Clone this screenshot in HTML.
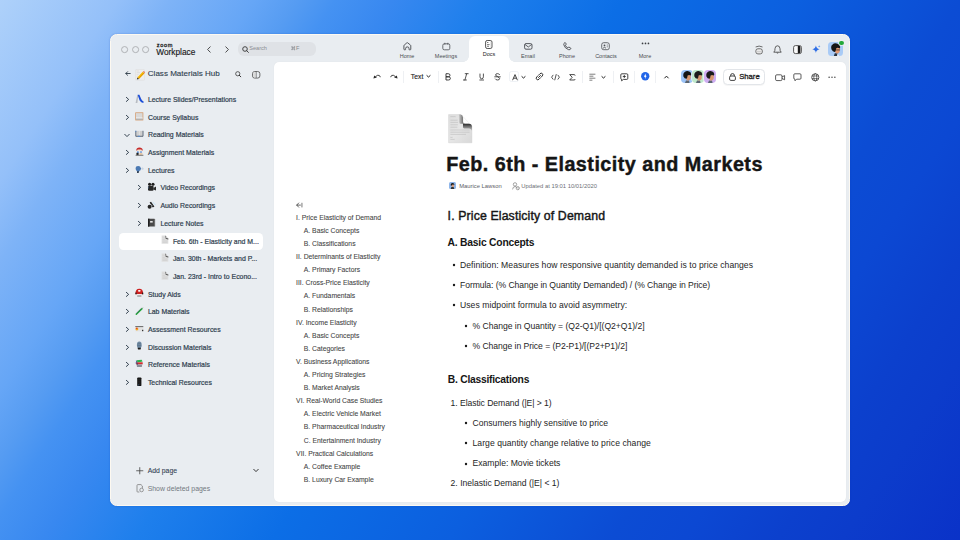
<!DOCTYPE html><html><head><meta charset="utf-8"><style>
*{margin:0;padding:0}
html,body{width:960px;height:540px;overflow:hidden}
body{position:relative;font-family:"Liberation Sans", sans-serif;
 background:linear-gradient(123deg,#aed1fa 0%,#94c0f9 9%,#7eb3f7 13%,#66a6f6 19.4%,#569cf2 22.7%,#4592f2 25.6%,#3888f0 30%,#1e7fec 37%,#0c6ee6 47.5%,#0c5fdf 61%,#0c4cd4 73.3%,#0c48d3 79%,#0c40cd 86%,#0c3ccb 91%,#0a32c8 100%);}
.t{position:absolute;white-space:nowrap;font-family:"Liberation Sans", sans-serif}
.i{position:absolute;overflow:visible}
.box{position:absolute}
.box svg{display:block}
#win{position:absolute;left:109.9px;top:34px;width:740.1px;height:472px;box-sizing:border-box;border:1.1px solid #fdf9f1;border-radius:6.5px;background:#e9edf1;box-shadow:0 0 1.6px rgba(0,50,170,0.4)}
#panel{position:absolute;left:274px;top:62px;width:572px;height:439.6px;border-radius:5px;background:#fff;box-shadow:0 0 1.2px rgba(0,0,0,0.07)}
#tab{position:absolute;left:469px;top:35.8px;width:40px;height:30px;border-radius:6px 6px 0 0;background:#fff}
#tabl{position:absolute;left:463px;top:56.2px;width:6px;height:6px;background:radial-gradient(circle at 0 0,transparent 5.6px,#fff 6.1px)}
#tabr{position:absolute;left:509px;top:56.2px;width:6px;height:6px;background:radial-gradient(circle at 100% 0,transparent 5.6px,#fff 6.1px)}
</style></head><body><div id="win"></div>
<div id="panel"></div>
<div id="tab"></div>
<div id="tabl"></div><div id="tabr"></div>
<svg class="i" style="left:121.4px;top:45.9px;" width="7.2" height="7.2" viewBox="0 0 7.2 7.2"><circle cx="3.6" cy="3.6" r="3.05" fill="none" stroke="#a9abaf" stroke-width="0.9"/></svg>
<svg class="i" style="left:131.6px;top:45.9px;" width="7.2" height="7.2" viewBox="0 0 7.2 7.2"><circle cx="3.6" cy="3.6" r="3.05" fill="none" stroke="#a9abaf" stroke-width="0.9"/></svg>
<svg class="i" style="left:141.8px;top:45.9px;" width="7.2" height="7.2" viewBox="0 0 7.2 7.2"><circle cx="3.6" cy="3.6" r="3.05" fill="none" stroke="#a9abaf" stroke-width="0.9"/></svg>
<div class="t" style="left:156.7px;top:42.16px;height:7.28px;line-height:7.28px;font-size:5.6px;color:#1f1f1f;font-weight:400;letter-spacing:0.7px;-webkit-text-stroke:0.28px #1f1f1f;">zoom</div>
<div class="t" style="left:156.3px;top:46.91px;height:10.79px;line-height:10.79px;font-size:8.3px;color:#1a1a1a;font-weight:400;letter-spacing:0px;-webkit-text-stroke:0.15px #1a1a1a;">Workplace</div>
<svg class="i" style="left:205.5px;top:45.5px;" width="6" height="7" viewBox="0 0 6 7"><path d="M4.2 0.8 L1.6 3.5 L4.2 6.2" fill="none" stroke="#3a3a3a" stroke-width="0.9" stroke-linecap="round" stroke-linejoin="round"/></svg>
<svg class="i" style="left:223.5px;top:45.5px;" width="6" height="7" viewBox="0 0 6 7"><path d="M1.8 0.8 L4.4 3.5 L1.8 6.2" fill="none" stroke="#3a3a3a" stroke-width="0.9" stroke-linecap="round" stroke-linejoin="round"/></svg>
<div class="box" style="left:238px;top:41.6px;width:78px;height:14.4px;border-radius:6px;background:#dfe2e6"></div>
<svg class="i" style="left:241.5px;top:45.5px;" width="7" height="7" viewBox="0 0 7 7"><circle cx="3" cy="3" r="2.3" fill="none" stroke="#333" stroke-width="0.9"/><path d="M4.7 4.7 L6.4 6.4" stroke="#333" stroke-width="0.9" stroke-linecap="round"/></svg>
<div class="t" style="left:249.2px;top:44.56px;height:7.28px;line-height:7.28px;font-size:5.6px;color:#8a8d92;font-weight:400;letter-spacing:0px;">Search</div>
<svg class="i" style="left:290.6px;top:45.7px;" width="4.6" height="4.4" viewBox="0 0 4.6 4.4"><path d="M1.4 1.4 H3.2 V3 H1.4Z M1.4 1.4 Q0.4 1.4 0.6 0.7 Q0.9 0.3 1.4 0.6 Z M3.2 1.4 Q4.2 1.4 4 0.7 Q3.7 0.3 3.2 0.6Z M1.4 3 Q0.4 3 0.6 3.7 Q0.9 4.1 1.4 3.8Z M3.2 3 Q4.2 3 4 3.7 Q3.7 4.1 3.2 3.8Z" fill="none" stroke="#85888d" stroke-width="0.6"/></svg>
<div class="t" style="left:295.9px;top:44.56px;height:7.28px;line-height:7.28px;font-size:5.6px;color:#85888d;font-weight:400;letter-spacing:0px;">F</div>
<div class="t" style="left:377.0px;width:60px;text-align:center;top:52.82px;height:7.15px;line-height:7.15px;font-size:5.5px;color:#4a4d52;font-weight:400;letter-spacing:0px">Home</div>
<div class="t" style="left:416.0px;width:60px;text-align:center;top:52.82px;height:7.15px;line-height:7.15px;font-size:5.5px;color:#4a4d52;font-weight:400;letter-spacing:0px">Meetings</div>
<div class="t" style="left:459.0px;width:60px;text-align:center;top:51.32px;height:7.15px;line-height:7.15px;font-size:5.5px;color:#222;font-weight:400;letter-spacing:0px">Docs</div>
<div class="t" style="left:498.0px;width:60px;text-align:center;top:52.82px;height:7.15px;line-height:7.15px;font-size:5.5px;color:#4a4d52;font-weight:400;letter-spacing:0px">Email</div>
<div class="t" style="left:537.0px;width:60px;text-align:center;top:52.82px;height:7.15px;line-height:7.15px;font-size:5.5px;color:#4a4d52;font-weight:400;letter-spacing:0px">Phone</div>
<div class="t" style="left:576.0px;width:60px;text-align:center;top:52.82px;height:7.15px;line-height:7.15px;font-size:5.5px;color:#4a4d52;font-weight:400;letter-spacing:0px">Contacts</div>
<div class="t" style="left:615.0px;width:60px;text-align:center;top:52.72px;height:7.15px;line-height:7.15px;font-size:5.5px;color:#4a4d52;font-weight:400;letter-spacing:0px">More</div>
<svg class="i" style="left:402.6px;top:41.6px;" width="8.6" height="8.6" viewBox="0 0 8.6 8.6"><path d="M0.9 7.2 V3.8 Q0.9 3.4 1.2 3.1 L3.8 0.9 Q4.3 0.5 4.8 0.9 L7.5 3.1 Q7.8 3.4 7.8 3.8 V7.2 Q7.8 7.8 7.2 7.8 H6.4 Q6 7.8 6 7.4 V6.4 Q6 4.9 4.3 4.9 Q2.6 4.9 2.6 6.4 V7.4 Q2.6 7.8 2.2 7.8 H1.5 Q0.9 7.8 0.9 7.2Z" fill="none" stroke="#3c3f44" stroke-width="0.85" stroke-linejoin="round"/></svg>
<svg class="i" style="left:441.8px;top:42px;" width="8.5" height="8.5" viewBox="0 0 8.5 8.5"><rect x="0.8" y="1.8" width="7" height="6" rx="1.5" fill="none" stroke="#4a4d52" stroke-width="0.8"/><path d="M2.8 0.8 V2.6 M5.8 0.8 V2.6" stroke="#4a4d52" stroke-width="0.8"/></svg>
<svg class="i" style="left:484.8px;top:40px;" width="7.8" height="9" viewBox="0 0 7.8 9"><rect x="0.6" y="0.5" width="6.4" height="8" rx="1.6" fill="none" stroke="#2a2a2a" stroke-width="0.8"/><path d="M5.9 1.2 V7.8" stroke="#bbb" stroke-width="0.5"/><path d="M2 2.5 H3.4 M2 4.6 H4.6 M2 6.3 H4" stroke="#333" stroke-width="0.65"/></svg>
<svg class="i" style="left:523.8px;top:42.6px;" width="8.6" height="6.8" viewBox="0 0 8.6 6.8"><rect x="0.6" y="0.6" width="7.4" height="5.6" rx="1.4" fill="none" stroke="#3c3f44" stroke-width="0.85"/><path d="M1.4 1.8 L4.3 4 L7.2 1.8" fill="none" stroke="#3c3f44" stroke-width="0.8" stroke-linecap="round"/></svg>
<svg class="i" style="left:562.8px;top:41.8px;" width="8.6" height="8.6" viewBox="0 0 8.6 8.6"><path d="M1.8 0.7 Q0.6 1.2 0.8 2.8 Q1.6 6.2 5.4 7.6 Q7.2 8.2 7.8 6.8 Q8 6 7 5.6 L6 5.2 Q5.2 5 4.8 5.8 Q3 5 2.4 3.4 Q3.2 3 3.1 2.2 L2.8 1.2 Q2.5 0.5 1.8 0.7Z" fill="none" stroke="#3c3f44" stroke-width="0.85" stroke-linejoin="round"/></svg>
<svg class="i" style="left:601px;top:42px;" width="9" height="8.5" viewBox="0 0 9 8.5"><rect x="0.7" y="0.7" width="7.6" height="7" rx="2" fill="none" stroke="#4a4d52" stroke-width="0.8"/><circle cx="3.5" cy="3.4" r="0.9" fill="#4a4d52"/><path d="M2 6.2 Q3.5 4.5 5 6.2" fill="none" stroke="#4a4d52" stroke-width="0.8"/><path d="M5.8 3 H6.8 M5.8 4.8 H6.8" stroke="#4a4d52" stroke-width="0.7"/></svg>
<svg class="i" style="left:640.5px;top:41.6px;" width="9" height="2.8" viewBox="0 0 9 2.8"><circle cx="1.55" cy="1.4" r="0.85" fill="#3a3d42"/><circle cx="4.5" cy="1.4" r="0.85" fill="#3a3d42"/><circle cx="7.45" cy="1.4" r="0.85" fill="#3a3d42"/></svg>
<svg class="i" style="left:754.6px;top:45px;" width="8.2" height="9.6" viewBox="0 0 8.2 9.6"><path d="M1 1.8 Q4.1 0.2 7.2 1.8" fill="none" stroke="#4a4a4a" stroke-width="0.8" stroke-linecap="round"/><rect x="0.9" y="3.8" width="6.4" height="5.1" rx="2" fill="#f2f2f2" stroke="#4a4a4a" stroke-width="0.8"/><path d="M1.4 6.6 H6.8" stroke="#cfcfcf" stroke-width="1.6"/></svg>
<svg class="i" style="left:773.4px;top:44.8px;" width="9" height="8.6" viewBox="0 0 9 8.6"><path d="M4.5 0.8 Q2.2 0.8 2 3.6 L1.8 5.6 L0.8 7.2 H8.2 L7.2 5.6 L7 3.6 Q6.8 0.8 4.5 0.8 Z" fill="none" stroke="#3c3c3c" stroke-width="0.8" stroke-linejoin="round"/><path d="M3.7 7.8 Q4.5 8.4 5.3 7.8" fill="none" stroke="#3c3c3c" stroke-width="0.8"/></svg>
<svg class="i" style="left:793px;top:44.8px;" width="9" height="9.2" viewBox="0 0 9 9.2"><rect x="0.6" y="0.6" width="7.8" height="8" rx="1.8" fill="#fafafa" stroke="#3c3c3c" stroke-width="0.85"/><rect x="4.8" y="1" width="2.4" height="7.2" fill="#1a1a1a"/><rect x="7.2" y="1" width="0.9" height="7.2" fill="#888"/></svg>
<svg class="i" style="left:812.4px;top:45px;" width="9.6" height="8.4" viewBox="0 0 9.6 8.4"><path d="M3.9 0.6 Q4.3 3.6 7.6 4.3 Q4.3 5 3.9 8 Q3.5 5 0.3 4.3 Q3.5 3.6 3.9 0.6 Z" fill="#2f6fe6"/><path d="M7.2 0.2 Q7.4 1.2 8.4 1.4 Q7.4 1.6 7.2 2.6 Q7 1.6 6 1.4 Q7 1.2 7.2 0.2Z" fill="#6aa0f2"/></svg>
<div class="box" style="left:828.2px;top:41.8px;width:14.8px;height:14.2px;border-radius:3.5px;background:#a9cbf6;overflow:hidden"><svg width="15.4" height="14.2" viewBox="0 0 16 15"><path d="M6 15 L7 12 L10 12 L9.5 15Z" fill="#2a3340"/><path d="M9.5 15 L10 12.5 L12 15Z" fill="#e8eef5"/><path d="M6.6 6 Q7 12.6 10 12.2 Q12.6 11.6 12.4 8 L12 5.6Z" fill="#e39a73"/><path d="M8.4 8.4 H12.6" stroke="#222" stroke-width="0.7"/><path d="M3.6 8 Q2.4 4 4.8 2.6 Q6.4 1 9 1.6 Q11.8 2 12.6 4.4 Q13 6.2 12.2 7 Q10.4 5.6 8.6 6.6 Q8.2 9.4 7.2 10.6 Q5 10.8 3.6 8Z" fill="#161616"/></svg></div>
<div class="box" style="left:839.2px;top:40.8px;width:4.6px;height:4.4px;border-radius:50%;background:#22a83a;box-shadow:0 0 0 0.7px #eef0f2"></div>
<svg class="i" style="left:124.9px;top:71.4px;" width="5.8" height="5" viewBox="0 0 5.8 5"><path d="M5.2 2.5 H0.9 M2.6 0.7 L0.8 2.5 L2.6 4.3" fill="none" stroke="#22313f" stroke-width="0.85" stroke-linecap="round" stroke-linejoin="round"/></svg>
<svg class="i" style="left:134.8px;top:68.8px;" width="10.2" height="11.6" viewBox="0 0 10.2 11.6"><rect x="0.5" y="0.5" width="9" height="10.8" rx="0.6" fill="#ededed" stroke="#d9d9d9" stroke-width="0.4"/><path d="M1.6 2 H4 M1.6 3.6 H5 M1.6 5.4 H3.6 M1.6 7.2 H3" stroke="#cfcfcf" stroke-width="0.45"/><path d="M3.2 9.2 L8.6 3.6" stroke="#f2b705" stroke-width="2.3"/><path d="M3.6 9.6 L8.9 4.1" stroke="#e08a00" stroke-width="0.7"/><path d="M7.8 2.8 L9.4 4.4 L10 3.4 Q9.6 2.2 8.8 2.1Z" fill="#e8805a"/><path d="M2.4 8.4 L4 10 L1.8 10.6Z" fill="#333"/></svg>
<div class="t" style="left:147.8px;top:68.97px;height:10.47px;line-height:10.47px;font-size:8.05px;color:#2f3e4e;font-weight:400;letter-spacing:0px;-webkit-text-stroke:0.12px #2f3e4e;">Class Materials Hub</div>
<svg class="i" style="left:234.9px;top:71.2px;" width="6.6" height="6.6" viewBox="0 0 6.6 6.6"><circle cx="2.75" cy="2.75" r="2.1" fill="none" stroke="#3a3a3a" stroke-width="0.8"/><path d="M4.3 4.3 L5.8 5.8" stroke="#222" stroke-width="0.9" stroke-linecap="round"/></svg>
<svg class="i" style="left:251.7px;top:70.7px;" width="8.4" height="7.6" viewBox="0 0 8.4 7.6"><rect x="0.5" y="0.5" width="7.4" height="6.6" rx="2.2" fill="none" stroke="#555" stroke-width="0.85"/><path d="M4.1 0.8 V6.8" stroke="#555" stroke-width="0.8"/><path d="M1.2 1.6 Q2.6 1 3.6 1.2 V6.4 Q2.6 6.6 1.2 6Z" fill="#dadada"/></svg>
<div class="box" style="left:118.8px;top:232.8px;width:144.7px;height:16.9px;border-radius:4.5px;background:#ffffff"></div>
<svg class="i" style="left:124.9px;top:96.0px;" width="5" height="6" viewBox="0 0 5 6"><path d="M1.35 1.35 L3.65 3.4 L1.35 5.45" fill="none" stroke="#22313f" stroke-width="0.9" stroke-linecap="round" stroke-linejoin="round"/></svg>
<svg class="i" style="left:134.7px;top:93.7px;" width="9" height="9.6" viewBox="0 0 9 9.6"><path d="M0.6 9 L2.2 1.2 L3.4 1 L2.4 9Z" fill="#b8bcc2"/><path d="M2.6 0.8 L4.4 0.8 L6.2 5 Q7 6.8 8.6 7.6 L8.4 9.1 Q6 8.8 4.6 6.4Z" fill="#1d4fd8"/></svg>
<div class="t" style="left:147.9px;top:96.02px;height:8.97px;line-height:8.97px;font-size:6.9px;color:#2f3e4f;font-weight:400;letter-spacing:0.02px;-webkit-text-stroke:0.2px #2f3e4f;">Lecture Slides/Presentations</div>
<svg class="i" style="left:124.9px;top:113.69px;" width="5" height="6" viewBox="0 0 5 6"><path d="M1.35 1.35 L3.65 3.4 L1.35 5.45" fill="none" stroke="#22313f" stroke-width="0.9" stroke-linecap="round" stroke-linejoin="round"/></svg>
<svg class="i" style="left:134.7px;top:111.39px;" width="9" height="9.6" viewBox="0 0 9 9.6"><rect x="0.65" y="1.75" width="7.3" height="7.3" fill="#d9d9d9" stroke="#d49664" stroke-width="0.7"/><rect x="1" y="6.6" width="6.6" height="1" fill="#fafafa"/><rect x="1" y="7.6" width="6.6" height="1.1" fill="#a9a9a9"/></svg>
<div class="t" style="left:147.9px;top:113.7px;height:8.97px;line-height:8.97px;font-size:6.9px;color:#2f3e4f;font-weight:400;letter-spacing:0.02px;-webkit-text-stroke:0.2px #2f3e4f;">Course Syllabus</div>
<svg class="i" style="left:124.4px;top:132.78px;" width="6" height="5" viewBox="0 0 6 5"><path d="M0.75 1.3 L3 3.6 L5.25 1.3" fill="none" stroke="#22313f" stroke-width="0.9" stroke-linecap="round" stroke-linejoin="round"/></svg>
<svg class="i" style="left:134.7px;top:129.07999999999998px;" width="9" height="9.6" viewBox="0 0 9 9.6"><rect x="1.3" y="1.9" width="6.2" height="5" fill="#cfcfcf"/><path d="M4.4 1.9 V6.9" stroke="#ececec" stroke-width="0.6"/><path d="M0.8 1.8 V7.3 H8 V1.8" fill="none" stroke="#3b4758" stroke-width="0.8"/><path d="M0.8 1.8 V2.8" stroke="#4a8be0" stroke-width="0.8"/><path d="M2.8 7.3 H5" stroke="#4a8be0" stroke-width="0.8"/></svg>
<div class="t" style="left:147.9px;top:131.39px;height:8.97px;line-height:8.97px;font-size:6.9px;color:#2f3e4f;font-weight:400;letter-spacing:0.02px;-webkit-text-stroke:0.2px #2f3e4f;">Reading Materials</div>
<svg class="i" style="left:124.9px;top:149.07px;" width="5" height="6" viewBox="0 0 5 6"><path d="M1.35 1.35 L3.65 3.4 L1.35 5.45" fill="none" stroke="#22313f" stroke-width="0.9" stroke-linecap="round" stroke-linejoin="round"/></svg>
<svg class="i" style="left:134.7px;top:146.76999999999998px;" width="9" height="9.6" viewBox="0 0 9 9.6"><path d="M1.2 3.4 Q1.4 0.6 4.4 0.6 Q7.4 0.6 7.8 3.4Z" fill="#c62a2a"/><rect x="2.2" y="2.6" width="4.6" height="2" rx="0.8" fill="#f3e2cf"/><circle cx="2.9" cy="5.1" r="0.9" fill="#3f86e0"/><circle cx="6" cy="5.1" r="0.9" fill="#3f86e0"/><rect x="1.4" y="5.8" width="2.2" height="2.4" fill="#222"/><rect x="4.6" y="5.8" width="2.8" height="2.4" fill="#e8c8a8"/><rect x="0.6" y="7.8" width="7.8" height="1" fill="#777"/></svg>
<div class="t" style="left:147.9px;top:149.08px;height:8.97px;line-height:8.97px;font-size:6.9px;color:#2f3e4f;font-weight:400;letter-spacing:0.02px;-webkit-text-stroke:0.2px #2f3e4f;">Assignment Materials</div>
<svg class="i" style="left:124.9px;top:166.76px;" width="5" height="6" viewBox="0 0 5 6"><path d="M1.35 1.35 L3.65 3.4 L1.35 5.45" fill="none" stroke="#22313f" stroke-width="0.9" stroke-linecap="round" stroke-linejoin="round"/></svg>
<svg class="i" style="left:134.7px;top:164.45999999999998px;" width="9" height="9.6" viewBox="0 0 9 9.6"><path d="M0.6 4.6 Q0.6 2.1 3.2 2.1 Q5.6 2.1 5.8 4 L6.4 5 L5.6 5.4 Q5.6 6.8 4.4 6.8 L3.6 8.8 L2 8.8 L2 7.2 Q0.6 6.4 0.6 4.6Z" fill="#4b79b3"/><path d="M2 7.4 H4 L3.6 8.8 H2Z" fill="#222"/><path d="M7.4 3.4 V5.8 M8.2 4 V5.4" stroke="#9db4d0" stroke-width="0.4"/></svg>
<div class="t" style="left:147.9px;top:166.77px;height:8.97px;line-height:8.97px;font-size:6.9px;color:#2f3e4f;font-weight:400;letter-spacing:0.02px;-webkit-text-stroke:0.2px #2f3e4f;">Lectures</div>
<svg class="i" style="left:137.4px;top:184.45px;" width="5" height="6" viewBox="0 0 5 6"><path d="M1.35 1.35 L3.65 3.4 L1.35 5.45" fill="none" stroke="#22313f" stroke-width="0.9" stroke-linecap="round" stroke-linejoin="round"/></svg>
<svg class="i" style="left:147.2px;top:182.14999999999998px;" width="9" height="9.6" viewBox="0 0 9 9.6"><circle cx="2.6" cy="2.3" r="1.55" fill="#1d1d1d"/><circle cx="6" cy="2.3" r="1.55" fill="#1d1d1d"/><rect x="1" y="3.8" width="5.6" height="4.9" rx="1.2" fill="#262626"/><path d="M6.4 6 L9 4.6 V8.6 L6.4 7.4Z" fill="#2b2b2b"/><path d="M1.4 4.6 V6.6" stroke="#5f8ab5" stroke-width="0.5"/></svg>
<div class="t" style="left:160.4px;top:184.46px;height:8.97px;line-height:8.97px;font-size:6.9px;color:#2f3e4f;font-weight:400;letter-spacing:0.02px;-webkit-text-stroke:0.2px #2f3e4f;">Video Recordings</div>
<svg class="i" style="left:137.4px;top:202.14px;" width="5" height="6" viewBox="0 0 5 6"><path d="M1.35 1.35 L3.65 3.4 L1.35 5.45" fill="none" stroke="#22313f" stroke-width="0.9" stroke-linecap="round" stroke-linejoin="round"/></svg>
<svg class="i" style="left:147.2px;top:199.83999999999997px;" width="9" height="9.6" viewBox="0 0 9 9.6"><path d="M5.6 2.2 Q7.8 3.4 8.6 5.2" fill="none" stroke="#bfe0f5" stroke-width="0.9"/><path d="M2.6 2.4 L4 1.8 L7.4 6.4 L5.8 7.6Z" fill="#1f1f1f"/><circle cx="2.6" cy="6.8" r="2" fill="#262626"/><path d="M3.8 4.2 L5.4 6" stroke="#c8d4dc" stroke-width="0.6"/></svg>
<div class="t" style="left:160.4px;top:202.15px;height:8.97px;line-height:8.97px;font-size:6.9px;color:#2f3e4f;font-weight:400;letter-spacing:0.02px;-webkit-text-stroke:0.2px #2f3e4f;">Audio Recordings</div>
<svg class="i" style="left:137.4px;top:219.83px;" width="5" height="6" viewBox="0 0 5 6"><path d="M1.35 1.35 L3.65 3.4 L1.35 5.45" fill="none" stroke="#22313f" stroke-width="0.9" stroke-linecap="round" stroke-linejoin="round"/></svg>
<svg class="i" style="left:147.2px;top:217.53px;" width="9" height="9.6" viewBox="0 0 9 9.6"><rect x="1" y="0.7" width="6.8" height="7.9" rx="0.5" fill="#4a4a4a"/><rect x="1" y="0.7" width="1.4" height="7.9" fill="#1e1e1e"/><rect x="3.1" y="3" width="2.6" height="1.6" fill="#e6e6e6"/><path d="M7.8 1 V8.4" stroke="#777" stroke-width="0.5"/></svg>
<div class="t" style="left:160.4px;top:219.84px;height:8.97px;line-height:8.97px;font-size:6.9px;color:#2f3e4f;font-weight:400;letter-spacing:0.02px;-webkit-text-stroke:0.2px #2f3e4f;">Lecture Notes</div>
<svg class="i" style="left:159.7px;top:235.22px;" width="9" height="9.6" viewBox="0 0 9 9.6"><path d="M1.6 0.6 H5.8 L8.3 3.4 V8.7 H1.6Z" fill="#dedede"/><path d="M5.4 0.5 Q6.4 0.8 6.2 3.2 Q7.2 3 8.3 3.6 V4.4 Q7 3.8 5.8 4 Q5.6 2 5.4 0.5Z" fill="#3e3e3e"/><path d="M2.4 2.2 H4.6 M2.4 4.4 H5 M2.4 6 H7.4 M2.4 7.4 H7.4" stroke="#c4c4c4" stroke-width="0.4"/></svg>
<div class="t" style="left:172.9px;top:237.53px;height:8.97px;line-height:8.97px;font-size:6.9px;color:#2f3e4f;font-weight:400;letter-spacing:0.02px;-webkit-text-stroke:0.2px #2f3e4f;">Feb. 6th - Elasticity and M...</div>
<svg class="i" style="left:159.7px;top:252.90999999999997px;" width="9" height="9.6" viewBox="0 0 9 9.6"><path d="M1.6 0.6 H5.8 L8.3 3.4 V8.7 H1.6Z" fill="#dedede"/><path d="M5.4 0.5 Q6.4 0.8 6.2 3.2 Q7.2 3 8.3 3.6 V4.4 Q7 3.8 5.8 4 Q5.6 2 5.4 0.5Z" fill="#3e3e3e"/><path d="M2.4 2.2 H4.6 M2.4 4.4 H5 M2.4 6 H7.4 M2.4 7.4 H7.4" stroke="#c4c4c4" stroke-width="0.4"/></svg>
<div class="t" style="left:172.9px;top:255.22px;height:8.97px;line-height:8.97px;font-size:6.9px;color:#2f3e4f;font-weight:400;letter-spacing:0.02px;-webkit-text-stroke:0.2px #2f3e4f;">Jan. 30th - Markets and P...</div>
<svg class="i" style="left:159.7px;top:270.59999999999997px;" width="9" height="9.6" viewBox="0 0 9 9.6"><path d="M1.6 0.6 H5.8 L8.3 3.4 V8.7 H1.6Z" fill="#dedede"/><path d="M5.4 0.5 Q6.4 0.8 6.2 3.2 Q7.2 3 8.3 3.6 V4.4 Q7 3.8 5.8 4 Q5.6 2 5.4 0.5Z" fill="#3e3e3e"/><path d="M2.4 2.2 H4.6 M2.4 4.4 H5 M2.4 6 H7.4 M2.4 7.4 H7.4" stroke="#c4c4c4" stroke-width="0.4"/></svg>
<div class="t" style="left:172.9px;top:272.91px;height:8.97px;line-height:8.97px;font-size:6.9px;color:#2f3e4f;font-weight:400;letter-spacing:0.02px;-webkit-text-stroke:0.2px #2f3e4f;">Jan. 23rd - Intro to Econo...</div>
<svg class="i" style="left:124.9px;top:290.59px;" width="5" height="6" viewBox="0 0 5 6"><path d="M1.35 1.35 L3.65 3.4 L1.35 5.45" fill="none" stroke="#22313f" stroke-width="0.9" stroke-linecap="round" stroke-linejoin="round"/></svg>
<svg class="i" style="left:134.7px;top:288.28999999999996px;" width="9" height="9.6" viewBox="0 0 9 9.6"><path d="M0.4 6.2 Q0.4 0.8 4.3 0.8 Q8.2 0.8 8.2 6.2Z" fill="#cc2020"/><ellipse cx="4.3" cy="2.8" rx="1.4" ry="0.9" fill="#fff"/><rect x="0.4" y="4.6" width="1.2" height="1.6" fill="#1e1e1e"/><rect x="7" y="4.6" width="1.2" height="1.6" fill="#1e1e1e"/><rect x="1.8" y="6.2" width="5" height="1.3" fill="#f6f6f6"/><rect x="2.2" y="7.5" width="4.2" height="1" fill="#777"/></svg>
<div class="t" style="left:147.9px;top:290.6px;height:8.97px;line-height:8.97px;font-size:6.9px;color:#2f3e4f;font-weight:400;letter-spacing:0.02px;-webkit-text-stroke:0.2px #2f3e4f;">Study Aids</div>
<svg class="i" style="left:124.9px;top:308.28px;" width="5" height="6" viewBox="0 0 5 6"><path d="M1.35 1.35 L3.65 3.4 L1.35 5.45" fill="none" stroke="#22313f" stroke-width="0.9" stroke-linecap="round" stroke-linejoin="round"/></svg>
<svg class="i" style="left:134.7px;top:305.97999999999996px;" width="9" height="9.6" viewBox="0 0 9 9.6"><path d="M1.3 8.3 L7 2.6" stroke="#22a93a" stroke-width="1.5" stroke-linecap="round"/><path d="M1.2 7.6 L6.4 2.4" stroke="#3b3f6a" stroke-width="0.5"/><path d="M7 2.6 L8.2 1.3" stroke="#b9b9b9" stroke-width="0.8"/></svg>
<div class="t" style="left:147.9px;top:308.29px;height:8.97px;line-height:8.97px;font-size:6.9px;color:#2f3e4f;font-weight:400;letter-spacing:0.02px;-webkit-text-stroke:0.2px #2f3e4f;">Lab Materials</div>
<svg class="i" style="left:124.9px;top:325.97px;" width="5" height="6" viewBox="0 0 5 6"><path d="M1.35 1.35 L3.65 3.4 L1.35 5.45" fill="none" stroke="#22313f" stroke-width="0.9" stroke-linecap="round" stroke-linejoin="round"/></svg>
<svg class="i" style="left:134.7px;top:323.67px;" width="9" height="9.6" viewBox="0 0 9 9.6"><rect x="0.3" y="2.3" width="8" height="5" fill="#e2e2e2"/><path d="M0.3 2.6 H8.3" stroke="#333" stroke-width="0.7"/><rect x="7" y="5.8" width="1.3" height="1.4" fill="#333"/><circle cx="1.9" cy="4.9" r="1.4" fill="#f08a24"/><circle cx="1.9" cy="5.6" r="0.8" fill="#f4c20d"/><circle cx="1.6" cy="4.4" r="0.6" fill="#e03b3b"/></svg>
<div class="t" style="left:147.9px;top:325.99px;height:8.97px;line-height:8.97px;font-size:6.9px;color:#2f3e4f;font-weight:400;letter-spacing:0.02px;-webkit-text-stroke:0.2px #2f3e4f;">Assessment Resources</div>
<svg class="i" style="left:124.9px;top:343.66px;" width="5" height="6" viewBox="0 0 5 6"><path d="M1.35 1.35 L3.65 3.4 L1.35 5.45" fill="none" stroke="#22313f" stroke-width="0.9" stroke-linecap="round" stroke-linejoin="round"/></svg>
<svg class="i" style="left:134.7px;top:341.36px;" width="9" height="9.6" viewBox="0 0 9 9.6"><ellipse cx="4.3" cy="4" rx="2.4" ry="3.4" fill="#6f8aa3"/><path d="M2.6 3 Q4.3 2 6 3 M2.4 4.6 H6.2" stroke="#4b5d70" stroke-width="0.4" fill="none"/><path d="M2.6 6.8 H6 L5.6 8.5 H3Z" fill="#1e1e1e"/></svg>
<div class="t" style="left:147.9px;top:343.68px;height:8.97px;line-height:8.97px;font-size:6.9px;color:#2f3e4f;font-weight:400;letter-spacing:0.02px;-webkit-text-stroke:0.2px #2f3e4f;">Discussion Materials</div>
<svg class="i" style="left:124.9px;top:361.35px;" width="5" height="6" viewBox="0 0 5 6"><path d="M1.35 1.35 L3.65 3.4 L1.35 5.45" fill="none" stroke="#22313f" stroke-width="0.9" stroke-linecap="round" stroke-linejoin="round"/></svg>
<svg class="i" style="left:134.7px;top:359.05px;" width="9" height="9.6" viewBox="0 0 9 9.6"><path d="M1.6 1.2 L6.6 0.8 L7.6 2.6 L2.6 3.4Z" fill="#2bb24c"/><path d="M0.8 3.4 L7.6 3.2 L7.8 5.2 L1.2 5.4Z" fill="#d42b2b"/><path d="M1.6 5.4 H7.2 L6.8 7.9 H2Z" fill="#8a8f99"/><path d="M1.4 1.6 L2.4 5.8" stroke="#1e3c78" stroke-width="0.8"/><path d="M0.4 3.6 L1.2 4.8" stroke="#4d8fe0" stroke-width="0.6"/></svg>
<div class="t" style="left:147.9px;top:361.37px;height:8.97px;line-height:8.97px;font-size:6.9px;color:#2f3e4f;font-weight:400;letter-spacing:0.02px;-webkit-text-stroke:0.2px #2f3e4f;">Reference Materials</div>
<svg class="i" style="left:124.9px;top:379.04px;" width="5" height="6" viewBox="0 0 5 6"><path d="M1.35 1.35 L3.65 3.4 L1.35 5.45" fill="none" stroke="#22313f" stroke-width="0.9" stroke-linecap="round" stroke-linejoin="round"/></svg>
<svg class="i" style="left:134.7px;top:376.74px;" width="9" height="9.6" viewBox="0 0 9 9.6"><rect x="2.2" y="0.4" width="4.2" height="8.7" rx="0.9" fill="#151515"/><path d="M3.2 2.4 H5.4 M3.2 4.2 H5.4 M3.2 6 H5.4 M3.2 7.6 H5.4" stroke="#3a3a3a" stroke-width="0.5"/><path d="M3 8 H4" stroke="#3e7bbf" stroke-width="0.5"/></svg>
<div class="t" style="left:147.9px;top:379.06px;height:8.97px;line-height:8.97px;font-size:6.9px;color:#2f3e4f;font-weight:400;letter-spacing:0.02px;-webkit-text-stroke:0.2px #2f3e4f;">Technical Resources</div>
<svg class="i" style="left:136px;top:467px;" width="7.5" height="7.5" viewBox="0 0 7.5 7.5"><path d="M3.75 0.6 V6.9 M0.6 3.75 H6.9" stroke="#444" stroke-width="0.8" stroke-linecap="round"/></svg>
<div class="t" style="left:147.7px;top:466.75px;height:8.9px;line-height:8.9px;font-size:6.85px;color:#344354;font-weight:400;letter-spacing:0px;-webkit-text-stroke:0.1px #344354;">Add page</div>
<svg class="i" style="left:252.8px;top:467.7px;" width="6" height="5" viewBox="0 0 6 5"><path d="M0.75 1.3 L3 3.6 L5.25 1.3" fill="none" stroke="#222" stroke-width="0.9" stroke-linecap="round" stroke-linejoin="round"/></svg>
<svg class="i" style="left:135.8px;top:484.4px;" width="8" height="8.4" viewBox="0 0 8 8.4"><path d="M1 1.4 Q1 0.6 1.8 0.6 H5 L6.4 2 V4" fill="none" stroke="#777" stroke-width="0.75"/><path d="M1 1.4 V7.4 Q1 8 1.8 8 H3.4" fill="none" stroke="#777" stroke-width="0.75"/><circle cx="5.6" cy="6" r="1.8" fill="none" stroke="#777" stroke-width="0.7"/></svg>
<div class="t" style="left:147.7px;top:484.71px;height:8.97px;line-height:8.97px;font-size:6.9px;color:#737880;font-weight:400;letter-spacing:0px;">Show deleted pages</div>
<svg class="i" style="left:372.8px;top:73.8px;" width="8" height="5" viewBox="0 0 8 5"><path d="M2.6 2.6 Q4.4 0.6 6.2 1.4 Q7 1.8 7.2 2.8" fill="none" stroke="#2a2a2a" stroke-width="0.9" stroke-linecap="round"/><path d="M0.4 4.4 L1.2 1.4 L3.9 3.6Z" fill="#2a2a2a"/></svg>
<svg class="i" style="left:389.8px;top:73.8px;" width="8" height="5" viewBox="0 0 8 5"><path d="M5.4 2.6 Q3.6 0.6 1.8 1.4 Q1 1.8 0.8 2.8" fill="none" stroke="#2a2a2a" stroke-width="0.9" stroke-linecap="round"/><path d="M7.6 4.4 L6.8 1.4 L4.1 3.6Z" fill="#2a2a2a"/></svg>
<div class="box" style="left:402.9px;top:71px;width:1px;height:12px;background:#eef0f3"></div>
<div class="box" style="left:438.0px;top:71px;width:1px;height:12px;background:#eef0f3"></div>
<div class="box" style="left:582.0px;top:71px;width:1px;height:12px;background:#eef0f3"></div>
<div class="box" style="left:613.0px;top:71px;width:1px;height:12px;background:#eef0f3"></div>
<div class="box" style="left:633.9px;top:71px;width:1px;height:12px;background:#eef0f3"></div>
<div class="box" style="left:655.1px;top:71px;width:1px;height:12px;background:#eef0f3"></div>
<div class="t" style="left:410.7px;top:73.11px;height:8.58px;line-height:8.58px;font-size:6.6px;color:#1e1e1e;font-weight:400;letter-spacing:0.2px;-webkit-text-stroke:0.15px #1e1e1e;">Text</div>
<svg class="i" style="left:425.5px;top:74.4px;" width="5" height="4" viewBox="0 0 5 4"><path d="M0.9 1.6 L2.5 3.0 L4.1 1.6" fill="none" stroke="#1e1e1e" stroke-width="1.0" stroke-linecap="round" stroke-linejoin="round"/></svg>
<svg class="i" style="left:445.4px;top:72.6px;" width="6.2" height="7.6" viewBox="0 0 6.2 7.6"><path d="M1 0.7 H3.3 Q5 0.7 5 2.3 Q5 3.8 3.3 3.8 H1 Z M1 3.8 H3.6 Q5.4 3.8 5.4 5.4 Q5.4 7 3.6 7 H1 Z" fill="none" stroke="#222" stroke-width="0.85" stroke-linejoin="round"/></svg>
<svg class="i" style="left:462.6px;top:72.6px;" width="5.6" height="7.6" viewBox="0 0 5.6 7.6"><path d="M2.2 0.7 H5.2 M0.4 7 H3.4 M3.7 0.7 L1.9 7" fill="none" stroke="#2a2a2a" stroke-width="0.8" stroke-linecap="round"/></svg>
<svg class="i" style="left:478.8px;top:72.6px;" width="5.4" height="7.6" viewBox="0 0 5.4 7.6"><path d="M1 0.6 V3.8 Q1 5.8 2.7 5.8 Q4.4 5.8 4.4 3.8 V0.6" fill="none" stroke="#2a2a2a" stroke-width="0.8"/><path d="M0.4 7 H5" stroke="#2a2a2a" stroke-width="0.8"/></svg>
<svg class="i" style="left:494px;top:72.6px;" width="7" height="7.6" viewBox="0 0 7 7.6"><path d="M5.6 1.6 Q5 0.6 3.5 0.6 Q1.6 0.6 1.6 2 Q1.6 3.1 3.4 3.4" fill="none" stroke="#2a2a2a" stroke-width="0.8" stroke-linecap="round"/><path d="M4.2 4.1 Q5.6 4.6 5.6 5.6 Q5.6 7 3.6 7 Q1.8 7 1.3 6" fill="none" stroke="#2a2a2a" stroke-width="0.8" stroke-linecap="round"/><path d="M0.3 3.8 H6.7" stroke="#2a2a2a" stroke-width="0.8"/></svg>
<div class="box" style="left:509.2px;top:71.1px;width:10px;height:10.7px;border-radius:2.5px;border:0.6px solid #eef1f5;box-sizing:border-box"></div>
<svg class="i" style="left:511.6px;top:73.6px;" width="6" height="6.6" viewBox="0 0 6 6.6"><path d="M0.6 6.2 L3 0.6 L5.4 6.2 M1.5 4.2 H4.5" fill="none" stroke="#222" stroke-width="0.85" stroke-linejoin="round"/></svg>
<svg class="i" style="left:521.4px;top:74.6px;" width="5" height="4" viewBox="0 0 5 4"><path d="M0.9 1.6 L2.5 3.0 L4.1 1.6" fill="none" stroke="#1e1e1e" stroke-width="1.0" stroke-linecap="round" stroke-linejoin="round"/></svg>
<svg class="i" style="left:534.5px;top:72.2px;" width="9" height="9" viewBox="0 0 9 9"><g transform="rotate(-45 4.5 4.5)" fill="none" stroke="#1e1e1e" stroke-width="0.85" stroke-linecap="round"><path d="M3.9 2.9 H2.2 Q0.5 2.9 0.5 4.5 Q0.5 6.1 2.2 6.1 H3.9 M5.1 2.9 H6.8 Q8.5 2.9 8.5 4.5 Q8.5 6.1 6.8 6.1 H5.1 M3.1 4.5 H5.9"/></g></svg>
<svg class="i" style="left:551px;top:73.8px;" width="9" height="6.4" viewBox="0 0 9 6.4"><path d="M2 1.2 L0.6 3.2 L2 5.2 M7 1.2 L8.4 3.2 L7 5.2 M5.2 0.5 L3.8 5.9" fill="none" stroke="#2a2a2a" stroke-width="0.8" stroke-linecap="round" stroke-linejoin="round"/></svg>
<svg class="i" style="left:568.8px;top:73.6px;" width="6.6" height="6.6" viewBox="0 0 6.6 6.6"><path d="M6.1 1.2 Q6 0.6 5.2 0.6 H0.7 L3.2 3.3 L0.7 6 H5.2 Q6 6 6.1 5.4" fill="none" stroke="#2a2a2a" stroke-width="0.85" stroke-linejoin="round" stroke-linecap="round"/></svg>
<svg class="i" style="left:589.2px;top:72.6px;" width="7.4" height="8" viewBox="0 0 7.4 8"><path d="M0.4 1.2 H6.4 M0.4 3.2 H4.4 M0.4 5.2 H6.4 M0.4 7.2 H3.4" stroke="#2a2a2a" stroke-width="0.6"/></svg>
<svg class="i" style="left:600.9px;top:74.6px;" width="5" height="4" viewBox="0 0 5 4"><path d="M0.9 1.6 L2.5 3.0 L4.1 1.6" fill="none" stroke="#1e1e1e" stroke-width="1.0" stroke-linecap="round" stroke-linejoin="round"/></svg>
<svg class="i" style="left:620.2px;top:72.8px;" width="8.5" height="8.5" viewBox="0 0 8.5 8.5"><path d="M1.8 0.8 H6.8 Q7.8 0.8 7.8 1.8 V5.4 Q7.8 6.4 6.8 6.4 H3.4 L1.6 7.8 V6.4 Q0.8 6.4 0.8 5.4 V1.8 Q0.8 0.8 1.8 0.8Z" fill="none" stroke="#222" stroke-width="0.85" stroke-linejoin="round"/><path d="M4.3 2 V5 M2.8 3.5 H5.8" stroke="#222" stroke-width="0.8"/></svg>
<svg class="i" style="left:641px;top:72.2px;" width="8.5" height="8.5" viewBox="0 0 8.5 8.5"><circle cx="4.25" cy="4.25" r="4.15" fill="#2266e8"/><path d="M4.25 1.6 Q4.55 3.9 5.6 4.25 Q4.55 4.6 4.25 6.9 Q3.95 4.6 2.9 4.25 Q3.95 3.9 4.25 1.6Z" fill="#fff"/></svg>
<svg class="i" style="left:663.8px;top:74.8px;" width="5" height="4" viewBox="0 0 5 4"><path d="M0.7 3 L2.5 1.1 L4.3 3" fill="none" stroke="#1e1e1e" stroke-width="1" stroke-linecap="round" stroke-linejoin="round"/></svg>
<div class="box" style="left:680.9px;top:70px;width:11.8px;height:13px;border-radius:4px;background:#9cc3f6;box-shadow:0 0 0 0.6px #fff;overflow:hidden"><svg width="12" height="13" viewBox="0 0 12 13"><path d="M4 13 L5 10.4 L8 10.4 L8.6 13Z" fill="#5b6672"/><path d="M4.6 5.4 Q4.8 10.8 7.6 10.6 Q10 10.2 9.8 6.6 L9.4 4.6Z" fill="#d8976f"/><path d="M2.4 6.6 Q1.8 3 3.8 2 Q5.2 0.8 7.4 1.2 Q9.8 1.6 10.2 3.8 Q10.4 5.2 9.8 5.6 Q8.2 4.6 6.6 5.4 Q6.4 7.8 5.4 8.8 Q3.4 8.8 2.4 6.6Z" fill="#141414"/></svg></div>
<div class="box" style="left:692.3px;top:70px;width:11.8px;height:13px;border-radius:4px;background:#bfe9cb;box-shadow:0 0 0 0.6px #fff;overflow:hidden"><svg width="12" height="13" viewBox="0 0 12 13"><path d="M4 13 L5 10.4 L8 10.4 L8.6 13Z" fill="#5b6672"/><path d="M4.6 5.4 Q4.8 10.8 7.6 10.6 Q10 10.2 9.8 6.6 L9.4 4.6Z" fill="#d8976f"/><path d="M2.4 6.6 Q1.8 3 3.8 2 Q5.2 0.8 7.4 1.2 Q9.8 1.6 10.2 3.8 Q10.4 5.2 9.8 5.6 Q8.2 4.6 6.6 5.4 Q6.4 7.8 5.4 8.8 Q3.4 8.8 2.4 6.6Z" fill="#1b1b1b"/></svg></div>
<div class="box" style="left:703.9px;top:70px;width:11.8px;height:13px;border-radius:4px;background:#cfaef2;box-shadow:0 0 0 0.6px #fff;overflow:hidden"><svg width="12" height="13" viewBox="0 0 12 13"><path d="M4 13 L5 10.4 L8 10.4 L8.6 13Z" fill="#5b6672"/><path d="M4.6 5.4 Q4.8 10.8 7.6 10.6 Q10 10.2 9.8 6.6 L9.4 4.6Z" fill="#d8976f"/><path d="M2.4 6.6 Q1.8 3 3.8 2 Q5.2 0.8 7.4 1.2 Q9.8 1.6 10.2 3.8 Q10.4 5.2 9.8 5.6 Q8.2 4.6 6.6 5.4 Q6.4 7.8 5.4 8.8 Q3.4 8.8 2.4 6.6Z" fill="#1a1a1a"/></svg></div>
<div class="box" style="left:722.6px;top:69.4px;width:42.8px;height:15.2px;border-radius:4.5px;border:0.7px solid #e2e5e9;box-sizing:border-box;background:#fff;box-shadow:0 0.4px 0.8px rgba(0,0,0,0.04)"></div>
<svg class="i" style="left:729.2px;top:72.9px;" width="7" height="7.8" viewBox="0 0 7 7.8"><rect x="0.6" y="3" width="5.8" height="4.4" rx="1.2" fill="none" stroke="#222" stroke-width="0.85"/><path d="M1.6 3.2 V2.5 Q1.6 0.6 3.5 0.6 Q5.4 0.6 5.4 2.5 V3.2" fill="none" stroke="#222" stroke-width="0.85"/></svg>
<div class="t" style="left:739.2px;top:72.2px;height:10.01px;line-height:10.01px;font-size:7.7px;color:#1e1e1e;font-weight:400;letter-spacing:0px;-webkit-text-stroke:0.3px #1e1e1e;">Share</div>
<svg class="i" style="left:774.6px;top:73.5px;" width="10.4" height="7.4" viewBox="0 0 10.4 7.4"><rect x="0.6" y="0.8" width="6.4" height="5.8" rx="1.2" fill="none" stroke="#333" stroke-width="0.8"/><path d="M7 3 L9.6 1.6 V5.8 L7 4.4" fill="none" stroke="#333" stroke-width="0.8" stroke-linejoin="round"/></svg>
<svg class="i" style="left:792.8px;top:73.1px;" width="8.8" height="8.6" viewBox="0 0 8.8 8.6"><path d="M1.8 0.8 H7 Q8 0.8 8 1.8 V5.2 Q8 6.2 7 6.2 H3.6 L2 7.8 V6.2 Q0.8 6.2 0.8 5.2 V1.8 Q0.8 0.8 1.8 0.8Z" fill="none" stroke="#333" stroke-width="0.8" stroke-linejoin="round"/></svg>
<svg class="i" style="left:810.6px;top:73.1px;" width="8.6" height="8.6" viewBox="0 0 8.6 8.6"><circle cx="4.3" cy="4.3" r="3.6" fill="none" stroke="#333" stroke-width="0.8"/><ellipse cx="4.3" cy="4.3" rx="1.5" ry="3.6" fill="none" stroke="#333" stroke-width="0.7"/><path d="M0.8 3 H7.8 M0.8 5.6 H7.8" stroke="#333" stroke-width="0.6"/></svg>
<svg class="i" style="left:828.4px;top:76.0px;" width="8" height="2.4" viewBox="0 0 8 2.4"><circle cx="1.1" cy="1.2" r="0.7" fill="#333"/><circle cx="4" cy="1.2" r="0.7" fill="#333"/><circle cx="6.9" cy="1.2" r="0.7" fill="#333"/></svg>
<svg class="i" style="left:296.4px;top:202.4px;" width="7.4" height="6.4" viewBox="0 0 7.4 6.4"><path d="M4.4 3.1 H0.8 M2.7 1.0 L0.7 3.1 L2.7 5.2" fill="none" stroke="#333" stroke-width="0.75" stroke-linecap="round" stroke-linejoin="round"/><path d="M5.95 0.8 V5.4" stroke="#555" stroke-width="0.8"/></svg>
<div class="t" style="left:296.1px;top:213.88px;height:8.84px;line-height:8.84px;font-size:6.8px;color:#454545;font-weight:400;letter-spacing:0px;-webkit-text-stroke:0.08px #454545;">I. Price Elasticity of Demand</div>
<div class="t" style="left:303.8px;top:226.98px;height:8.84px;line-height:8.84px;font-size:6.8px;color:#454545;font-weight:400;letter-spacing:0px;-webkit-text-stroke:0.08px #454545;">A. Basic Concepts</div>
<div class="t" style="left:303.8px;top:240.08px;height:8.84px;line-height:8.84px;font-size:6.8px;color:#454545;font-weight:400;letter-spacing:0px;-webkit-text-stroke:0.08px #454545;">B. Classifications</div>
<div class="t" style="left:296.1px;top:253.18px;height:8.84px;line-height:8.84px;font-size:6.8px;color:#454545;font-weight:400;letter-spacing:0px;-webkit-text-stroke:0.08px #454545;">II. Determinants of Elasticity</div>
<div class="t" style="left:303.8px;top:266.28px;height:8.84px;line-height:8.84px;font-size:6.8px;color:#454545;font-weight:400;letter-spacing:0px;-webkit-text-stroke:0.08px #454545;">A. Primary Factors</div>
<div class="t" style="left:296.1px;top:279.38px;height:8.84px;line-height:8.84px;font-size:6.8px;color:#454545;font-weight:400;letter-spacing:0px;-webkit-text-stroke:0.08px #454545;">III. Cross-Price Elasticity</div>
<div class="t" style="left:303.8px;top:292.48px;height:8.84px;line-height:8.84px;font-size:6.8px;color:#454545;font-weight:400;letter-spacing:0px;-webkit-text-stroke:0.08px #454545;">A. Fundamentals</div>
<div class="t" style="left:303.8px;top:305.58px;height:8.84px;line-height:8.84px;font-size:6.8px;color:#454545;font-weight:400;letter-spacing:0px;-webkit-text-stroke:0.08px #454545;">B. Relationships</div>
<div class="t" style="left:296.1px;top:318.68px;height:8.84px;line-height:8.84px;font-size:6.8px;color:#454545;font-weight:400;letter-spacing:0px;-webkit-text-stroke:0.08px #454545;">IV. Income Elasticity</div>
<div class="t" style="left:303.8px;top:331.78px;height:8.84px;line-height:8.84px;font-size:6.8px;color:#454545;font-weight:400;letter-spacing:0px;-webkit-text-stroke:0.08px #454545;">A. Basic Concepts</div>
<div class="t" style="left:303.8px;top:344.88px;height:8.84px;line-height:8.84px;font-size:6.8px;color:#454545;font-weight:400;letter-spacing:0px;-webkit-text-stroke:0.08px #454545;">B. Categories</div>
<div class="t" style="left:296.1px;top:357.98px;height:8.84px;line-height:8.84px;font-size:6.8px;color:#454545;font-weight:400;letter-spacing:0px;-webkit-text-stroke:0.08px #454545;">V. Business Applications</div>
<div class="t" style="left:303.8px;top:371.08px;height:8.84px;line-height:8.84px;font-size:6.8px;color:#454545;font-weight:400;letter-spacing:0px;-webkit-text-stroke:0.08px #454545;">A. Pricing Strategies</div>
<div class="t" style="left:303.8px;top:384.18px;height:8.84px;line-height:8.84px;font-size:6.8px;color:#454545;font-weight:400;letter-spacing:0px;-webkit-text-stroke:0.08px #454545;">B. Market Analysis</div>
<div class="t" style="left:296.1px;top:397.28px;height:8.84px;line-height:8.84px;font-size:6.8px;color:#454545;font-weight:400;letter-spacing:0px;-webkit-text-stroke:0.08px #454545;">VI. Real-World Case Studies</div>
<div class="t" style="left:303.8px;top:410.38px;height:8.84px;line-height:8.84px;font-size:6.8px;color:#454545;font-weight:400;letter-spacing:0px;-webkit-text-stroke:0.08px #454545;">A. Electric Vehicle Market</div>
<div class="t" style="left:303.8px;top:423.48px;height:8.84px;line-height:8.84px;font-size:6.8px;color:#454545;font-weight:400;letter-spacing:0px;-webkit-text-stroke:0.08px #454545;">B. Pharmaceutical Industry</div>
<div class="t" style="left:303.8px;top:436.58px;height:8.84px;line-height:8.84px;font-size:6.8px;color:#454545;font-weight:400;letter-spacing:0px;-webkit-text-stroke:0.08px #454545;">C. Entertainment Industry</div>
<div class="t" style="left:296.1px;top:449.68px;height:8.84px;line-height:8.84px;font-size:6.8px;color:#454545;font-weight:400;letter-spacing:0px;-webkit-text-stroke:0.08px #454545;">VII. Practical Calculations</div>
<div class="t" style="left:303.8px;top:462.78px;height:8.84px;line-height:8.84px;font-size:6.8px;color:#454545;font-weight:400;letter-spacing:0px;-webkit-text-stroke:0.08px #454545;">A. Coffee Example</div>
<div class="t" style="left:303.8px;top:475.88px;height:8.84px;line-height:8.84px;font-size:6.8px;color:#454545;font-weight:400;letter-spacing:0px;-webkit-text-stroke:0.08px #454545;">B. Luxury Car Example</div>
<svg class="i" style="left:447.6px;top:113.8px;" width="24.6" height="29.4" viewBox="0 0 24.6 29.4"><defs><linearGradient id="pg" x1="0" y1="0" x2="1" y2="1"><stop offset="0" stop-color="#dedede"/><stop offset="0.5" stop-color="#e6e6e6"/><stop offset="1" stop-color="#d8d8d8"/></linearGradient><linearGradient id="cv" x1="0" y1="0" x2="1" y2="0"><stop offset="0" stop-color="#d0d0d0"/><stop offset="0.7" stop-color="#707070"/><stop offset="1" stop-color="#222"/></linearGradient><linearGradient id="ch" x1="0" y1="1" x2="0" y2="0"><stop offset="0" stop-color="#d6d6d6"/><stop offset="0.6" stop-color="#7a7a7a"/><stop offset="1" stop-color="#2a2a2a"/></linearGradient></defs><path d="M0.6 0.6 H12.4 Q14.6 0.8 15 3.4 V8.2 Q15.3 9.8 17.2 9.8 H21 Q23.8 10 23.9 12.6 V28.8 H0.6Z" fill="url(#pg)" stroke="#c9c9c9" stroke-width="0.4"/><path d="M10.6 0.6 H12.4 Q14.6 0.8 15 3.4 V8.2 Q15.3 9.8 17.2 9.8 H12.2 Q11.2 9.4 11.2 8 V3 Q11.2 1.2 10.6 0.6Z" fill="url(#cv)"/><path d="M15 9.8 H21 Q23.8 10 23.9 12.6 V17.6 Q23.6 14.6 21 14.4 H16.2 Q15 14.2 15 13Z" fill="url(#ch)"/><path d="M15.6 3.2 L20.6 8.6" stroke="#e2e2e2" stroke-width="0.5"/><path d="M2.4 2.6 H7.6 M2.4 6.2 H9.6 M2.4 8.4 H10 M2.4 10.8 H9.8 M2.4 13.2 H9.4 M2.4 16 H21.6 M2.4 18.2 H21.6 M2.4 20.4 H18 M2.4 23.4 H4.6 M2.4 25.4 H6.6" stroke="#b9b9b9" stroke-width="0.55"/></svg>
<div class="t" style="left:446.2px;top:152.03px;height:25.74px;line-height:25.74px;font-size:19.8px;color:#151515;font-weight:700;letter-spacing:0.47px;-webkit-text-stroke:0.4px #151515;">Feb. 6th - Elasticity and Markets</div>
<div class="box" style="left:449.2px;top:182.3px;width:7px;height:7.2px;border-radius:1.5px;background:#8fb6ea;overflow:hidden"><svg width="7" height="7.2" viewBox="0 0 12 12"><path d="M3 12 Q3 8 6 8 Q9 8 9 12Z" fill="#333"/><ellipse cx="6.5" cy="6" rx="2.2" ry="2.6" fill="#d99a74"/><path d="M3 6 Q2.5 1.5 6 1.5 Q9.5 1.5 9.3 5 Q8 3.6 6 4.2 Q5 5.8 3.6 6.4Z" fill="#1b1b1b"/></svg></div>
<div class="t" style="left:459.2px;top:183.0px;height:7.6px;line-height:7.6px;font-size:5.85px;color:#5c6066;font-weight:400;letter-spacing:0px;">Maurice Lawson</div>
<svg class="i" style="left:512.3px;top:181.8px;" width="8" height="8.4" viewBox="0 0 8 8.4"><circle cx="3" cy="2.4" r="1.7" fill="none" stroke="#666" stroke-width="0.6"/><path d="M0.6 7.4 Q0.8 4.6 3 4.6 Q4 4.6 4.6 5.2" fill="none" stroke="#666" stroke-width="0.6"/><circle cx="5.8" cy="6.2" r="1.6" fill="none" stroke="#666" stroke-width="0.6"/><path d="M5.8 5.4 V6.3 H6.5" fill="none" stroke="#666" stroke-width="0.5"/></svg>
<div class="t" style="left:521.2px;top:183.0px;height:7.6px;line-height:7.6px;font-size:5.85px;color:#6c7076;font-weight:400;letter-spacing:0px;">Updated at 19:01 10/01/2020</div>
<div class="t" style="left:447.6px;top:209.31px;height:15.99px;line-height:15.99px;font-size:12.3px;color:#161616;font-weight:400;letter-spacing:0.13px;-webkit-text-stroke:0.42px #161616;">I. Price Elasticity of Demand</div>
<div class="t" style="left:447.6px;top:235.91px;height:13.39px;line-height:13.39px;font-size:10.3px;color:#161616;font-weight:700;letter-spacing:-0.22px;">A. Basic Concepts</div>
<svg class="i" style="left:451.75px;top:263.4px;" width="4" height="4" viewBox="0 0 4 4"><circle cx="2" cy="2" r="1.2" fill="#1a1a1a"/></svg>
<div class="t" style="left:460px;top:260.31px;height:11.18px;line-height:11.18px;font-size:8.6px;color:#1e1e1e;font-weight:400;letter-spacing:0.042px;">Definition: Measures how responsive quantity demanded is to price changes</div>
<svg class="i" style="left:451.75px;top:283.4px;" width="4" height="4" viewBox="0 0 4 4"><circle cx="2" cy="2" r="1.2" fill="#1a1a1a"/></svg>
<div class="t" style="left:460px;top:280.31px;height:11.18px;line-height:11.18px;font-size:8.6px;color:#1e1e1e;font-weight:400;letter-spacing:-0.065px;">Formula: (% Change in Quantity Demanded) / (% Change in Price)</div>
<svg class="i" style="left:451.75px;top:303.4px;" width="4" height="4" viewBox="0 0 4 4"><circle cx="2" cy="2" r="1.2" fill="#1a1a1a"/></svg>
<div class="t" style="left:460px;top:300.31px;height:11.18px;line-height:11.18px;font-size:8.6px;color:#1e1e1e;font-weight:400;letter-spacing:0.06px;">Uses midpoint formula to avoid asymmetry:</div>
<svg class="i" style="left:464.25px;top:323.7px;" width="4" height="4" viewBox="0 0 4 4"><circle cx="2" cy="2" r="1.2" fill="#1a1a1a"/></svg>
<div class="t" style="left:472.5px;top:320.61px;height:11.18px;line-height:11.18px;font-size:8.6px;color:#1e1e1e;font-weight:400;letter-spacing:-0.02px;">% Change in Quantity = (Q2-Q1)/[(Q2+Q1)/2]</div>
<svg class="i" style="left:464.25px;top:343.7px;" width="4" height="4" viewBox="0 0 4 4"><circle cx="2" cy="2" r="1.2" fill="#1a1a1a"/></svg>
<div class="t" style="left:472.5px;top:340.61px;height:11.18px;line-height:11.18px;font-size:8.6px;color:#1e1e1e;font-weight:400;letter-spacing:-0.05px;">% Change in Price = (P2-P1)/[(P2+P1)/2]</div>
<div class="t" style="left:447.8px;top:372.81px;height:13.39px;line-height:13.39px;font-size:10.3px;color:#161616;font-weight:700;letter-spacing:-0.25px;">B. Classifications</div>
<div class="t" style="left:450.6px;top:397.81px;height:11.18px;line-height:11.18px;font-size:8.6px;color:#1e1e1e;font-weight:400;letter-spacing:-0.06px;">1. Elastic Demand (|E| &gt; 1)</div>
<svg class="i" style="left:464.25px;top:421.2px;" width="4" height="4" viewBox="0 0 4 4"><circle cx="2" cy="2" r="1.2" fill="#1a1a1a"/></svg>
<div class="t" style="left:472.5px;top:417.81px;height:11.18px;line-height:11.18px;font-size:8.6px;color:#1e1e1e;font-weight:400;letter-spacing:0.01px;">Consumers highly sensitive to price</div>
<svg class="i" style="left:464.25px;top:441.40000000000003px;" width="4" height="4" viewBox="0 0 4 4"><circle cx="2" cy="2" r="1.2" fill="#1a1a1a"/></svg>
<div class="t" style="left:472.5px;top:438.01px;height:11.18px;line-height:11.18px;font-size:8.6px;color:#1e1e1e;font-weight:400;letter-spacing:0.045px;">Large quantity change relative to price change</div>
<svg class="i" style="left:464.25px;top:461.6px;" width="4" height="4" viewBox="0 0 4 4"><circle cx="2" cy="2" r="1.2" fill="#1a1a1a"/></svg>
<div class="t" style="left:472.5px;top:458.21px;height:11.18px;line-height:11.18px;font-size:8.6px;color:#1e1e1e;font-weight:400;letter-spacing:0px;">Example: Movie tickets</div>
<div class="t" style="left:450.6px;top:478.31px;height:11.18px;line-height:11.18px;font-size:8.6px;color:#1e1e1e;font-weight:400;letter-spacing:0px;">2. Inelastic Demand (|E| &lt; 1)</div></body></html>
